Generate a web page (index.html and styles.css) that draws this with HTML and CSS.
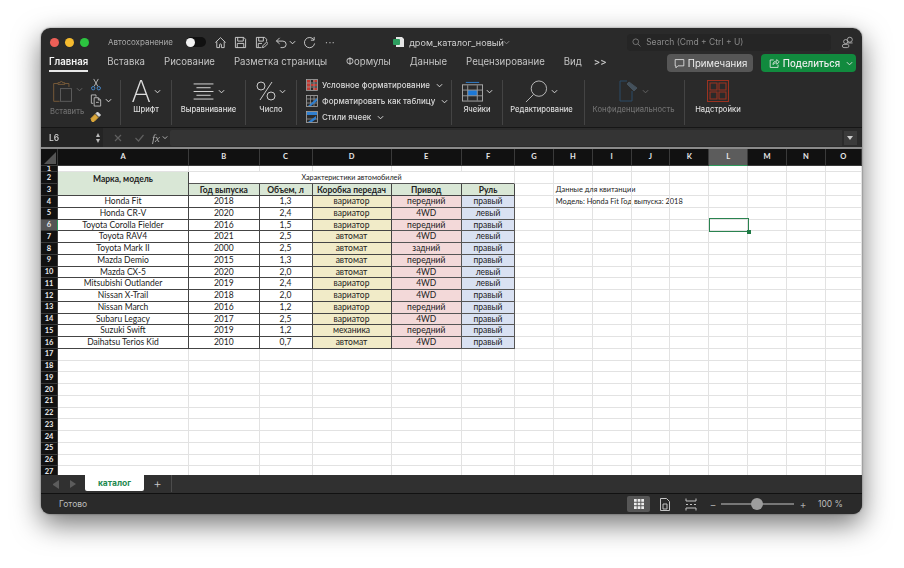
FILE: index.html
```html
<!DOCTYPE html>
<html lang="ru">
<head>
  <meta charset="UTF-8">
  <title>дром_каталог_новый</title>
  <link rel="stylesheet" href="styles.css">
</head>
<body>

<div class="window">

  <div class="titlebar">
    <span class="light red"></span><span class="light yellow"></span><span class="light green"></span>
    <span class="autosave">Автосохранение</span>
    <span class="toggle"><span class="knob"></span></span>
    <svg class="qa home" viewBox="0 0 14 14"><path d="M1.5 7 7 1.8 12.5 7M3 6v6.5h3V9.5a1 1 0 0 1 2 0v3h3V6"/></svg>
    <svg class="qa save" viewBox="0 0 14 14"><path d="M1.5 1.5h9l2 2v9h-11zM4 1.5v4h6v-4M3.5 12.5V8h7v4.5"/></svg>
    <svg class="qa saveas" viewBox="0 0 14 14"><path d="M7 12.5H1.5v-11h9l2 2V6M4 1.5v4h5v-4M3.5 12V8h4M8 12.5l.5-2 4-4 1.5 1.5-4 4z"/></svg>
    <svg class="qa undo" viewBox="0 0 14 14"><path d="M1.5 5.5h7a3.5 3.5 0 0 1 0 7H6M1.5 5.5 5 2M1.5 5.5 5 8.5"/></svg>
    <svg class="chev undochev" viewBox="0 0 8 5"><path d="M1 1l3 3 3-3"/></svg>
    <svg class="qa redo" viewBox="0 0 14 14"><path d="M11.6 4A5.5 5.5 0 1 0 12.5 8M12 1v3.5H8.500"/></svg>
    <span class="dots">···</span>

    <svg class="fileicon" viewBox="0 0 12 12">
      <path class="filepage" d="M3 1h6l2 2v8H3z"/>
      <rect class="filebadge" x="0" y="3" width="7" height="6" rx="1"/>
    </svg>
    <span class="filename">дром_каталог_новый</span>
    <svg class="chev filechev" viewBox="0 0 8 5"><path d="M1 1l3 3 3-3"/></svg>

    <div class="search">
      <svg class="searchicon" viewBox="0 0 12 12"><circle cx="5" cy="5" r="3.8"/><path d="M8 8l3.200 3.200"/></svg>
      <span>Search (Cmd + Ctrl + U)</span>
    </div>
    <svg class="people" viewBox="0 0 14 14"><circle cx="9.500" cy="4" r="2.700"/><path d="M6.500 7.500h6"/><circle cx="5" cy="6" r="2.200"/><rect x="1.500" y="9" width="7" height="3.500" rx="1.700"/></svg>
  </div>

  <div class="tabs">
    <span class="tab active">Главная</span>
    <span class="tab">Вставка</span>
    <span class="tab">Рисование</span>
    <span class="tab">Разметка страницы</span>
    <span class="tab">Формулы</span>
    <span class="tab">Данные</span>
    <span class="tab">Рецензирование</span>
    <span class="tab">Вид</span>
    <span class="more">&gt;&gt;</span>
    <button class="notes">
      <svg viewBox="0 0 14 13"><path d="M1.500 1.500h11v8H5l-2.500 2.500V9.500h-1z"/></svg>Примечания
    </button>
    <button class="share">
      <svg viewBox="0 0 14 13"><path d="M6 2H1.500v9.500h10V8M5 8c0-3 2-4.500 5-4.500V1.500l3 3-3 3V5.500c-2 0-3.500 .8-5 2.500z"/></svg>Поделиться
      <svg class="chev" viewBox="0 0 8 5"><path d="M1 1l3 3 3-3"/></svg>
    </button>
  </div>

  <div class="ribbon">
    <div class="group paste">
      <div class="pastemain">
        <svg class="clipboard" viewBox="0 0 26 28">
          <path class="clipbrown" d="M7 4H2v21h7M15 4h5v4M7 5V3h2.500a1.500 1.500 0 0 1 3 0H15v2z"/>
          <rect class="clipsheet" x="10" y="10" width="13" height="15"/>
        </svg>
        <svg class="chev dim" viewBox="0 0 8 5"><path d="M1 1l3 3 3-3"/></svg>
        <span class="label off">Вставить</span>
      </div>
      <div class="pastetools">
        <svg class="tool" viewBox="0 0 12 14"><path class="steel" d="M3.500 1 8 9M8.500 1 4 9"/><circle class="blue" cx="3" cy="11" r="1.800"/><circle class="blue" cx="9" cy="11" r="1.800"/></svg>
        <div class="copyrow">
          <svg class="tool" viewBox="0 0 12 14"><path class="steel" d="M1 1h5v2M1 1v9h2M4 4h4.500L11 6.500V13H4zM8.500 4v2.500H11M6 9h3"/></svg>
          <svg class="chev" viewBox="0 0 8 5"><path d="M1 1l3 3 3-3"/></svg>
        </div>
        <svg class="tool brush" viewBox="0 0 12 12"><path class="gold" d="M1 8l4-4 3 3-4 4H2z"/><path class="white" d="M6 3l1.500-1.500 3 3L9 6z"/></svg>
      </div>
    </div>

    <div class="group font">
      <div class="gicon"><span class="bigA">A</span><svg class="chev" viewBox="0 0 8 5"><path d="M1 1l3 3 3-3"/></svg></div>
      <span class="label">Шрифт</span>
    </div>

    <div class="group align">
      <div class="gicon">
        <svg class="alignicon" viewBox="0 0 22 18"><path d="M0 1h21M3 5h15M0 9h21M3 13h15M0 17h21"/></svg>
        <svg class="chev" viewBox="0 0 8 5"><path d="M1 1l3 3 3-3"/></svg>
      </div>
      <span class="label">Выравнивание</span>
    </div>

    <div class="group number">
      <div class="gicon">
        <svg class="percent" viewBox="0 0 20 20"><circle cx="5" cy="5" r="4"/><circle cx="15" cy="15" r="4"/><path d="M16 1 4 19"/></svg>
        <svg class="chev" viewBox="0 0 8 5"><path d="M1 1l3 3 3-3"/></svg>
      </div>
      <span class="label">Число</span>
    </div>

    <div class="group styles">
      <div class="stylerow">
        <svg class="sticon" viewBox="0 0 12 12"><rect class="stframe" x=".5" y=".5" width="11" height="11"/><path class="stred" d="M1 1h3v10H1zM7 1h4v2H7zM5 5h6v2H5zM7 9h4v2H7z"/><path class="stline" d="M4.500 1v10M8 1v10M1 4h10M1 8h10"/></svg>
        <span>Условное форматирование</span>
        <svg class="chev" viewBox="0 0 8 5"><path d="M1 1l3 3 3-3"/></svg>
      </div>
      <div class="stylerow">
        <svg class="sticon" viewBox="0 0 12 12"><rect class="stframe" x=".5" y=".5" width="11" height="11"/><path class="stline" d="M4.500 1v10M8 1v10M1 4h10M1 8h10"/><path class="stblue" d="M2 11 11 3v3l-6 5z"/></svg>
        <span>Форматировать как таблицу</span>
        <svg class="chev" viewBox="0 0 8 5"><path d="M1 1l3 3 3-3"/></svg>
      </div>
      <div class="stylerow">
        <svg class="sticon" viewBox="0 0 12 12"><rect class="stframe" x=".5" y=".5" width="11" height="11"/><path class="stblue" d="M1 1h10v3H1z"/><path class="stline" d="M1 8h10"/><path class="stblue" d="M2 11 10 5v3l-4 3z"/></svg>
        <span>Стили ячеек</span>
        <svg class="chev" viewBox="0 0 8 5"><path d="M1 1l3 3 3-3"/></svg>
      </div>
    </div>

    <div class="group cells">
      <div class="gicon">
        <svg class="cellsicon" viewBox="0 0 22 21">
          <path class="blueline" d="M4 1h14"/>
          <rect class="stframe" x=".5" y="3.500" width="21" height="17"/>
          <rect class="fillblue" x="6" y="9" width="10" height="6"/>
          <path class="stline" d="M6 4v16M16 4v16M1 9h20M1 15h20"/>
        </svg>
        <svg class="chev" viewBox="0 0 8 5"><path d="M1 1l3 3 3-3"/></svg>
      </div>
      <span class="label">Ячейки</span>
    </div>

    <div class="group edit">
      <div class="gicon">
        <svg class="magnifier" viewBox="0 0 24 24"><circle cx="14.500" cy="9" r="8"/><path d="M9 15 1 23"/></svg>
        <svg class="chev" viewBox="0 0 8 5"><path d="M1 1l3 3 3-3"/></svg>
      </div>
      <span class="label">Редактирование</span>
    </div>

    <div class="group privacy">
      <div class="gicon">
        <svg class="shield" viewBox="0 0 20 22"><path class="shieldpage" d="M1 1h7M1 1v20h12V11"/><path class="shieldtag" d="M8 4l2-2 8 6-3 3z"/></svg>
        <svg class="chev dim" viewBox="0 0 8 5"><path d="M1 1l3 3 3-3"/></svg>
      </div>
      <span class="label off">Конфиденциальность</span>
    </div>

    <div class="group addins">
      <div class="gicon">
        <svg class="addinsicon" viewBox="0 0 22 22"><path d="M.5.500h21v21H.5zM3 3h7v7H3zM12 3h7v7h-7zM3 12h7v7H3zM12 12h7v7h-7z"/></svg>
      </div>
      <span class="label">Надстройки</span>
    </div>
  </div>

  <div class="formulabar">
    <div class="namebox">
      <span>L6</span>
      <span class="stepper"><i class="up"></i><i class="down"></i></span>
    </div>
    <svg class="fbicon cancel" viewBox="0 0 8 8"><path d="M1 1l6 6M7 1 1 7"/></svg>
    <svg class="fbicon enter" viewBox="0 0 10 8"><path d="M1 4l3 3 5-6"/></svg>
    <span class="fx">fx</span>
    <svg class="chev fxchev" viewBox="0 0 8 5"><path d="M1 1l3 3 3-3"/></svg>
    <div class="formulainput"></div>
    <span class="expand"><i></i></span>
  </div>

  <div class="sheetwrap">
    <div class="sheet" id="sheet"></div>
    <div class="selection"><span class="handle"></span></div>
  </div>

  <div class="sheettabs">
    <i class="arrow left"></i>
    <i class="arrow right"></i>
    <span class="sheettab">каталог</span>
    <span class="addsheet">+</span>
  </div>

  <div class="statusbar">
    <span class="ready">Готово</span>
    <span class="viewbtn">
      <svg viewBox="0 0 11 11"><path d="M0 0h3v3H0zM4 0h3v3H4zM8 0h3v3H8zM0 4h3v3H0zM4 4h3v3H4zM8 4h3v3H8zM0 8h3v3H0zM4 8h3v3H4zM8 8h3v3H8z"/></svg>
    </span>
    <svg class="viewicon pagelayout" viewBox="0 0 10 13"><path d="M.5.500h6l3 3v9h-9zM3 6h4v5H3z"/></svg>
    <svg class="viewicon pagebreak" viewBox="0 0 12 13"><path d="M1 .500V3h10V.500M1 12.500V10h10v2.500M1 6.500h2M5 6.500h2M9 6.500h2"/></svg>
    <span class="zoomsign minus">−</span>
    <span class="slider"><span class="thumb"></span></span>
    <span class="zoomsign plus">+</span>
    <span class="zoomvalue">100 %</span>
  </div>

</div>

<script src="script.js"></script>
</body>
</html>
```

FILE: styles.css
```css
* { box-sizing: border-box; }
html, body { margin: 0; height: 100%; }
body {
  width: 904px; height: 568px; overflow: hidden; background: #fff;
  padding: 28px 0 0 41px;
  font-family: Inter, "Noto Sans", sans-serif;
}

.window {
  width: 821px; height: 486px; border-radius: 9px; overflow: hidden;
  background: #2a2a2a; color: #ddd;
  display: flex; flex-direction: column;
  filter: blur(.4px);
}
body::before {
  content: ""; position: absolute; left: 41px; top: 28px; width: 821px; height: 486px;
  border-radius: 9px; box-shadow: 0 10px 28px rgba(0,0,0,.55), 0 0 2px rgba(0,0,0,.5);
}

svg { fill: none; stroke: currentColor; flex: none; }
.chev { width: 7px; height: 5px; color: #ddd; stroke-width: 1.1; }
.chev.dim { color: #666; }

/* title bar */
.titlebar { height: 26px; display: flex; align-items: center; flex: none; padding: 2px 0 0 9px; }
.light { width: 9px; height: 9px; border-radius: 50%; margin-right: 6px; }
.red { background: #ec5f57; }
.yellow { background: #f5bb2f; }
.green { background: #2cc440; }
.autosave { margin-left: 13px; font-size: 8px; color: #a8a8a8; width: 78px; white-space: nowrap; }
.toggle { width: 20px; height: 10px; border-radius: 5px; background: #111; display: block; }
.knob { display: block; width: 9px; height: 9px; margin-top: .5px; border-radius: 50%; background: #f2f2f2; }
.qa { width: 13px; height: 13px; color: #cfcfcf; stroke-width: 1; margin-left: 8px; }
.home { margin-left: 8px; }
.save { margin-left: 7px; }
.undo { margin-left: 7px; }
.undochev { margin: 0 0 0 1px; }
.redo { margin-left: 7px; }
.dots { margin-left: 9px; font-size: 10px; color: #bbb; letter-spacing: .5px; }
.fileicon { width: 12px; height: 12px; margin-left: 58px; stroke: none; }
.filepage { fill: #e6e6e6; }
.filebadge { fill: #2d9e5f; }
.filename { margin-left: 4px; font-size: 9.100px; color: #cfcfcf; white-space: nowrap; width: 92px; }
.filechev { color: #888; margin-left: 2px; }
.search {
  margin-left: 117px; width: 204px; height: 17px; border-radius: 4px; background: #252525;
  display: flex; align-items: center; padding-left: 5px; font-size: 8.500px; color: #8a8a8a;
}
.searchicon { width: 9px; height: 9px; margin-right: 5px; }
.people { width: 13px; height: 13px; margin-left: 10px; color: #bbb; stroke-width: .9; }

/* tabs */
.tabs { height: 19px; flex: none; display: flex; align-items: flex-start; padding-left: 8px; gap: 19px; font-size: 9.650px; }
.tab { height: 18px; line-height: 16px; color: #c4c4c4; white-space: nowrap; }
.tab.active { color: #f4f4f4; font-weight: 600; border-bottom: 2px solid #e8e8e8; }
.more { line-height: 16px; margin-left: -7px; color: #ccc; font-weight: 600; }
.notes, .share {
  border: 0; font: inherit; height: 18px; border-radius: 4px; display: flex; align-items: center;
  padding: 0; color: #eee; flex: none;
}
.notes { margin-left: 41px; width: 86px; background: #565656; padding-left: 7px; gap: 3px; }
.share { margin-left: -11px; width: 95px; background: #118a3e; padding-left: 8px; gap: 3px; font-weight: 500; }
.notes svg, .share svg { width: 11px; height: 11px; }
.share .chev { width: 7px; height: 5px; margin-left: 3px; }

/* ribbon */
.ribbon { height: 54px; flex: none; display: flex; padding-top: 7px; }
.group {
  height: 45px; border-right: 1px solid #444; display: flex; flex-direction: column; align-items: center;
  flex: none;
}
.group.addins { border-right: 0; }
.label { font-size: 7.600px; font-weight: 500; color: #ddd; white-space: nowrap; margin-top: auto; padding-bottom: 10px; line-height: 10px; }
.label.off { color: #6e6e6e; }
.gicon { height: 22px; display: flex; align-items: center; gap: 3px; }
.paste { width: 80px; flex-direction: row; align-items: flex-start; padding-left: 12px; }
.pastemain { width: 38px; display: flex; flex-wrap: wrap; align-items: center; margin-left: -1px; }
.pastemain .chev { margin: 0 0 6px 2px; }
.pastemain .label { width: 100%; padding-bottom: 0; margin-top: 3px; margin-left: -2px; }
.clipboard { width: 22px; height: 24px; stroke-width: 1.100; }
.clipbrown { stroke: #7b5c3a; }
.clipsheet { stroke: #5f5f5f; }
.pastetools { display: flex; flex-direction: column; align-items: flex-start; gap: 3px; margin-top: -2px; }
.copyrow { display: flex; align-items: center; gap: 3px; }
.tool { width: 12px; height: 13px; stroke-width: 1; }
.steel { stroke: #bbb; }
.blue { stroke: #4a8fd6; }
.gold { fill: #d9a63a; stroke: #d9a63a; }
.white { fill: #ddd; stroke: #ddd; }
.font { width: 51px; }
.bigA { font-size: 30px; font-weight: 200; line-height: 22px; color: #ddd; }
.align { width: 74px; }
.alignicon { width: 22px; height: 17px; stroke-width: 1; }
.number { width: 51px; }
.percent { width: 20px; height: 20px; stroke-width: .9; }
.styles { width: 155px; align-items: flex-start; padding-left: 9px; gap: 4px; margin-top: 0; }
.stylerow { height: 12px; display: flex; align-items: center; font-size: 8px; font-weight: 500; color: #d8d8d8; white-space: nowrap; position: relative; top: -1px; }
.stylerow span { margin-left: 4px; margin-right: 6px; }
.sticon { width: 12px; height: 12px; stroke-width: .8; }
.stframe { stroke: #aaa; }
.stline { stroke: #999; }
.stred { fill: #c33a32; stroke: none; }
.stblue { fill: #2f7fd0; stroke: none; }
.cells { width: 51px; }
.cellsicon { width: 21px; height: 21px; stroke-width: 1; }
.blueline { stroke: #2f7fd0; }
.fillblue { fill: #1c78d6; stroke: none; }
.edit { width: 82px; padding-right: 4px; }
.magnifier { width: 23px; height: 23px; color: #ccc; stroke-width: .9; }
.privacy { width: 100px; padding-right: 2px; }
.shield { width: 20px; height: 22px; stroke-width: 1; }
.shieldpage { stroke: #2b4a66; }
.shieldtag { fill: #44515c; stroke: #44515c; }
.addins { width: 66px; }
.addinsicon { width: 22px; height: 22px; color: #9c3220; stroke-width: 1.100; }

/* formula bar */
.formulabar { height: 22px; flex: none; display: flex; align-items: center; background: #2b2b2b; border-top: 1px solid #161616; border-bottom: 2px solid #8a8a8a; padding-right: 2px; }
.namebox { width: 62px; height: 100%; display: flex; align-items: center; justify-content: space-between; padding: 0 3px 0 8px; font-size: 8.500px; font-weight: 500; background: #242424; }
.stepper { display: flex; flex-direction: column; gap: 2px; }
.stepper i { display: block; width: 0; height: 0; border-left: 2.500px solid transparent; border-right: 2.500px solid transparent; }
.stepper .up { border-bottom: 4px solid #bbb; }
.stepper .down { border-top: 4px solid #bbb; }
.fbicon { color: #5f5f5f; stroke-width: 1.200; height: 8px; }
.cancel { width: 8px; margin-left: 11px; }
.enter { width: 11px; margin-left: 12px; }
.fx { margin-left: 7px; font-family: "Liberation Serif", serif; font-style: italic; font-size: 11px; color: #aaa; }
.fxchev { margin-left: 2px; width: 6px; color: #ccc; }
.formulainput { margin-left: 2px; width: 672px; height: 16px; background: #343434; border-radius: 2px 0 0 2px; }
.expand { width: 13px; height: 14px; margin-left: 2px; background: #3b3b3b; display: flex; align-items: center; justify-content: center; }
.expand i { width: 0; height: 0; border-left: 3px solid transparent; border-right: 3px solid transparent; border-top: 4px solid #ccc; }

/* sheet */
.sheetwrap { height: 326px; flex: none; overflow: hidden; background: #fff; position: relative; }
.sheet {
  display: grid;
  grid-template-columns: 17px 131px 70.500px 53px 79px 70.500px 53px repeat(8, 38.850px) 1fr;
  grid-template-rows: 17px 6px 12px 12px repeat(24, 11.750px);
  font-family: Lato, "Open Sans", sans-serif; font-size: 8.500px; color: #222;
}
.cell {
  display: flex; align-items: center; justify-content: center; white-space: nowrap;
  border-right: 1px solid #e2e2e2; border-bottom: 1px solid #e2e2e2; min-width: 0; line-height: 1;
}
.span2 { grid-row: span 2; }
.span5 { grid-column: span 5; }
.left { justify-content: flex-start; padding: 1px 0 0 2px; font-size: 7.400px; }
.corner, .colhead, .rowhead { background: #111; color: #e8e8e8; font-weight: 700; border-color: #3a3a3a; overflow: hidden; }
.corner { position: relative; }
.corner::after {
  content: ""; position: absolute; right: 1px; bottom: 1px; width: 0; height: 0;
  border-left: 12px solid transparent; border-bottom: 12px solid #555;
}
.colhead { font-size: 7.500px; }
.rowhead { font-size: 7.500px; }
.colhead.sel { background: #5c5c5c; border-bottom: 1px solid #2f9a5c; }
.rowhead.sel { background: #555; border-right: 1px solid #2f9a5c; }
.title { background: #fff; border-color: #555; border-right-color: #e2e2e2; font-size: 7.200px; padding-top: 1px; }
.name { background: #fff; border-color: #444; }
.model { background: #d9e7d6; font-weight: 700; align-items: center; padding-bottom: 8px; border-color: #444; }
.head { background: #d9e7d6; font-weight: 700; border-color: #444; padding-top: 1px; }
.val { background: #fff; border-color: #444; }
.gear { background: #f1ebc8; border-color: #444; }
.drive { background: #f3d9d9; border-color: #555; }
.wheel { background: #d9e1f2; border-color: #555; }
.selection {
  position: absolute; left: 667.500px; top: 69px; width: 40.500px; height: 14px;
  border: 1.500px solid #2a8350;
}
.handle { position: absolute; right: -3px; bottom: -3px; background: #1f7a45; width: 4px; height: 4px; }

/* sheet tabs */
.sheettabs { height: 19px; flex: none; display: flex; align-items: flex-start; background: #303030; border-bottom: 1px solid #111; }
.arrow { width: 0; height: 0; margin-top: 5px; border-top: 4px solid transparent; border-bottom: 4px solid transparent; }
.arrow.left { margin-left: 10px; border-right: 6px solid #5c5c5c; }
.arrow.right { margin-left: 11px; border-left: 6px solid #5c5c5c; }
.sheettab {
  margin-left: 9px; width: 59px; height: 16px; background: #fff; color: #1f8a50; font-weight: 700; font-size: 8.500px;
  display: flex; align-items: center; justify-content: center; border-radius: 0 0 2px 2px;
}
.addsheet { width: 28px; height: 17px; line-height: 16px; text-align: center; color: #c8c8c8; font-size: 13px; font-weight: 300; border-right: 1px solid #4c4c4c; }

/* status bar */
.statusbar { flex: 1; display: flex; align-items: center; background: #2a2a2a; font-size: 8.500px; color: #bdbdbd; }
.ready { width: 586px; padding-left: 18px; }
.viewbtn { width: 23px; height: 16px; border-radius: 2px; background: #565656; display: flex; align-items: center; justify-content: center; }
.viewbtn svg { width: 10px; height: 10px; fill: #eee; stroke: none; }
.viewicon { color: #c4c4c4; stroke-width: 1; height: 13px; }
.pagelayout { width: 10px; margin-left: 10px; }
.pagebreak { width: 12px; margin-left: 15px; }
.zoomsign { font-size: 10px; color: #aaa; width: 8px; text-align: center; }
.minus { margin-left: 12px; }
.slider { margin-left: 4px; width: 73px; height: 2px; background: #777; position: relative; display: block; }
.thumb { position: absolute; left: 30px; top: -5px; width: 12px; height: 12px; border-radius: 50%; background: #9d9d9d; }
.plus { margin-left: 5px; }
.zoomvalue { margin-left: 11px; white-space: nowrap; font-size: 8.500px; }
```

FILE: script.js
```js
const columns = "ABCDEFGHIJKLMNO".split("");
const cars = [
  ["Honda Fit", "2018", "1,3", "вариатор", "передний", "правый"],
  ["Honda CR-V", "2020", "2,4", "вариатор", "4WD", "левый"],
  ["Toyota Corolla Fielder", "2016", "1,5", "вариатор", "передний", "правый"],
  ["Toyota RAV4", "2021", "2,5", "автомат", "4WD", "левый"],
  ["Toyota Mark II", "2000", "2,5", "автомат", "задний", "правый"],
  ["Mazda Demio", "2015", "1,3", "автомат", "передний", "правый"],
  ["Mazda CX-5", "2020", "2,0", "автомат", "4WD", "левый"],
  ["Mitsubishi Outlander", "2019", "2,4", "вариатор", "4WD", "левый"],
  ["Nissan X-Trail", "2018", "2,0", "вариатор", "4WD", "правый"],
  ["Nissan March", "2016", "1,2", "вариатор", "передний", "правый"],
  ["Subaru Legacy", "2017", "2,5", "вариатор", "4WD", "правый"],
  ["Suzuki Swift", "2019", "1,2", "механика", "передний", "правый"],
  ["Daihatsu Terios Kid", "2010", "0,7", "автомат", "4WD", "правый"]
];
const dataClass = ["name", "val", "val", "gear", "drive", "wheel"];
const heads = ["Год выпуска", "Объем, л", "Коробка передач", "Привод", "Руль"];
const notes = { 3: "Данные для квитанции", 4: "Модель: Honda Fit Год выпуска: 2018" };

const sheet = document.getElementById("sheet");

function addCell(cls, text) {
  const el = document.createElement("div");
  el.className = "cell " + cls;
  if (text) el.textContent = text;
  sheet.appendChild(el);
}

addCell("corner");
columns.forEach(c => addCell("colhead" + (c === "L" ? " sel" : ""), c));

for (let row = 1; row <= 27; row++) {
  addCell("rowhead" + (row === 6 ? " sel" : ""), String(row));
  let from = 0;
  if (row === 2) {
    addCell("model span2", "Марка, модель");
    addCell("title span5", "Характеристики автомобилей");
    from = 6;
  } else if (row === 3) {
    heads.forEach(h => addCell("head", h));
    from = 6;
  } else if (row >= 4 && row <= 16) {
    cars[row - 4].forEach((v, i) => addCell(dataClass[i], v));
    from = 6;
  }
  for (let c = from; c < columns.length; c++) {
    const text = columns[c] === "H" ? notes[row] : "";
    addCell("blank" + (text ? " left" : ""), text);
  }
}
```
